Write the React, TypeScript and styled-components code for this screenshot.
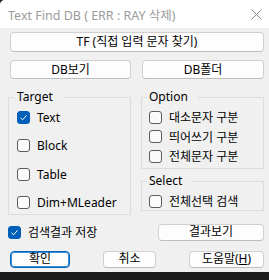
import { FC, ReactNode } from 'react'
import styled, { createGlobalStyle } from 'styled-components'

const GlobalStyle = createGlobalStyle`
  html, body {
    margin: 0;
    padding: 0;
    background: #1c1c1c;
  }
  body {
    font-family: 'Noto Sans', 'Noto Sans CJK KR', sans-serif;
    font-size: 12px;
    color: #000;
  }
`

const Window = styled.div`
  width: 269px;
  height: 280px;
  display: flex;
  flex-direction: column;
  background: #1c1c1c;
`

const Frame = styled.div`
  flex: 1;
  display: flex;
  flex-direction: column;
  background: #f0f0f0;
  border-top-left-radius: 5px;
  overflow: hidden;
`

const TitleBar = styled.div`
  height: 28px;
  flex-shrink: 0;
  display: flex;
  align-items: center;
  justify-content: space-between;
  padding: 0 7px 0 8px;
  background: #ffffff;
  color: #9b9b9b;
  font-size: 12.5px;
`

const Body = styled.div`
  flex: 1;
  display: flex;
  flex-direction: column;
  padding: 4px 5px 0 8px;
`

const Button = styled.button<{ $h?: number; $default?: boolean; $w?: number }>`
  height: ${(p) => p.$h ?? 18}px;
  ${(p) => (p.$w ? `width: ${p.$w}px;` : '')}
  padding: 0;
  background: #fdfdfd;
  border: 1px solid ${(p) => (p.$default ? '#0067c0' : '#d0d0d0')};
  border-bottom-color: ${(p) => (p.$default ? '#0067c0' : '#bdbdbd')};
  ${(p) => (p.$default ? 'box-shadow: inset 0 0 0 1px #3f8ed6;' : '')}
  border-radius: 4px;
  font-family: inherit;
  font-size: 12px;
  font-weight: 400;
  line-height: 1;
  color: #000;
  display: flex;
  align-items: center;
  justify-content: center;
`

const WideButton = styled(Button)`
  margin: 0 0 0 2px;
`

const Columns = styled.div<{ $top: number }>`
  display: grid;
  grid-template-columns: 123px 123px;
  column-gap: 10px;
  align-items: start;
  margin-top: ${(p) => p.$top}px;
`

const Stack = styled.div`
  display: flex;
  flex-direction: column;
  gap: 5px;
`

const Group = styled.fieldset<{ $pl: number; $pb: number; $gap: number }>`
  margin: 0;
  min-width: 0;
  border: 1px solid #dcdcdc;
  padding: 5px 4px ${(p) => p.$pb}px ${(p) => p.$pl}px;
  display: flex;
  flex-direction: column;
  gap: ${(p) => p.$gap}px;
`

const Legend = styled.legend`
  padding: 0 10px 0 2px;
  margin-left: -2px;
  font-size: 12px;
  line-height: 14px;
  height: 14px;
`

const CheckRow = styled.label<{ $h?: number }>`
  display: flex;
  align-items: center;
  gap: 7px;
  height: ${(p) => p.$h ?? 16}px;
  white-space: nowrap;
  font-size: 12px;
`

const Box = styled.span<{ $checked?: boolean }>`
  width: 13px;
  height: 13px;
  box-sizing: border-box;
  flex-shrink: 0;
  border-radius: 3px;
  border: 1px solid ${(p) => (p.$checked ? '#005fb8' : '#5c5c5c')};
  background: ${(p) => (p.$checked ? '#005fb8' : '#fbfbfb')};
  display: flex;
  align-items: center;
  justify-content: center;
`

const BottomRow = styled.div`
  display: flex;
  align-items: center;
  justify-content: space-between;
  margin-top: 9px;
`

const ButtonRow = styled.div`
  display: flex;
  justify-content: space-between;
  margin: 10px 0 0 2px;
`

const BottomShade = styled.div`
  height: 8px;
  flex-shrink: 0;
  background: #1c1c1c;
`

const Check: FC<{ checked?: boolean; children: ReactNode }> = ({ checked, children }) => (
  <CheckRow>
    <Box $checked={checked}>
      {checked && (
        <svg width="9" height="9" viewBox="0 0 9 9">
          <polyline points="1.5,4.8 3.6,6.8 7.6,2.3" fill="none" stroke="#fff" strokeWidth="1" />
        </svg>
      )}
    </Box>
    {children}
  </CheckRow>
)

const CloseIcon = () => (
  <svg width="11" height="11" viewBox="0 0 11 11">
    <path d="M0.5 0.5 L10.5 10.5 M10.5 0.5 L0.5 10.5" stroke="#8a8a8a" strokeWidth="1" />
  </svg>
)

const App: FC = () => {
  return (
    <Window>
      <GlobalStyle />
      <Frame>
        <TitleBar>
          <span>Text Find DB ( ERR : RAY 삭제)</span>
          <CloseIcon />
        </TitleBar>
        <Body>
          <WideButton $h={20}>TF (직접 입력 문자 찾기)</WideButton>
          <Columns $top={8}>
            <WideButton $h={19}>DB보기</WideButton>
            <Button $h={19} style={{ marginLeft: 1 }}>
              DB폴더
            </Button>
          </Columns>
          <Columns $top={11}>
            <Group $pl={8} $pb={3} $gap={12.5}>
              <Legend>Target</Legend>
              <Check checked>Text</Check>
              <Check>Block</Check>
              <Check>Table</Check>
              <Check>Dim+MLeader</Check>
            </Group>
            <Stack>
              <Group $pl={7} $pb={4} $gap={3.5}>
                <Legend>Option</Legend>
                <Check>대소문자 구분</Check>
                <Check>띄어쓰기 구분</Check>
                <Check>전체문자 구분</Check>
              </Group>
              <Group $pl={7} $pb={1} $gap={0}>
                <Legend>Select</Legend>
                <Check>전체선택 검색</Check>
              </Group>
            </Stack>
          </Columns>
          <BottomRow>
            <Check checked>검색결과 저장</Check>
            <Button $h={17} $w={106}>
              결과보기
            </Button>
          </BottomRow>
          <ButtonRow>
            <Button $h={17} $w={60} $default>
              확인
            </Button>
            <Button $h={17} $w={53}>
              취소
            </Button>
            <Button $h={17} $w={75}>
              도움말(<u>H</u>)
            </Button>
          </ButtonRow>
        </Body>
      </Frame>
      <BottomShade />
    </Window>
  )
}

export default App
